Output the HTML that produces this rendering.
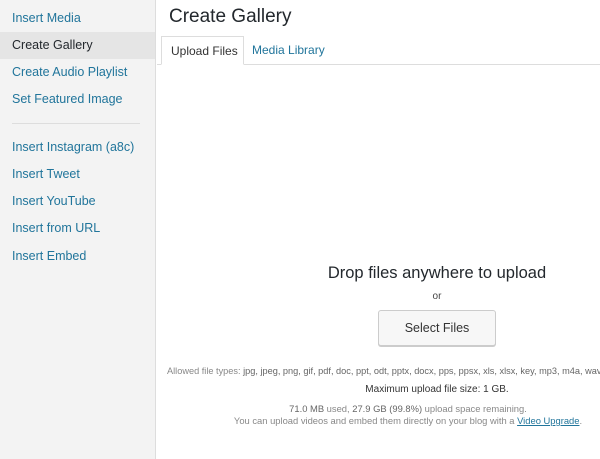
<!DOCTYPE html>
<html><head><style>
*{margin:0;padding:0;box-sizing:border-box}
body{width:600px;height:459px;overflow:hidden;font-family:"Liberation Sans",sans-serif;background:#fff;position:relative}
.side{position:absolute;left:0;top:0;width:156px;height:459px;background:#f3f3f3;border-right:1px solid #ddd}
.side a{position:absolute;left:12px;font-size:12.5px;color:#21759b;text-decoration:none;white-space:nowrap}
.act{position:absolute;left:0;top:32px;width:155px;height:27px;background:#e5e5e5}
.sep{position:absolute;left:12px;top:123px;width:128px;height:1px;background:#ddd}
h1{position:absolute;left:169px;top:6px;font-size:19px;font-weight:normal;color:#23282d;letter-spacing:0}
.line{position:absolute;left:157px;top:64px;width:443px;height:1px;background:#ddd}
.tab{position:absolute;top:36px;height:29px;font-size:12px;line-height:28px;padding:0 9px;white-space:nowrap}
.t1{left:161px;width:83px;border:1px solid #ddd;border-bottom:1px solid #fff;background:#fff;color:#333}
.t2{left:243px;color:#21759b}
.c{position:absolute;left:237px;width:400px;text-align:center;white-space:nowrap}
.c2{position:absolute;left:208px;width:400px;text-align:center;white-space:nowrap}
.btn{position:absolute;left:378px;top:310px;width:118px;height:36px;border:1px solid #ccc;border-radius:3px;background:#f7f7f7;box-shadow:0 1px 0 #ccc;font-size:12.5px;color:#333;text-align:center;line-height:34px}
</style></head><body>
<div class="side">
<div class="act"></div>
<a style="top:11px">Insert Media</a>
<a style="top:38px;color:#23282d">Create Gallery</a>
<a style="top:65px">Create Audio Playlist</a>
<a style="top:92px">Set Featured Image</a>
<div class="sep"></div>
<a style="top:140px">Insert Instagram (a8c)</a>
<a style="top:167px">Insert Tweet</a>
<a style="top:194px">Insert YouTube</a>
<a style="top:221px">Insert from URL</a>
<a style="top:249px">Insert Embed</a>
</div>
<h1>Create Gallery</h1>
<div class="line"></div>
<div class="tab t1">Upload Files</div>
<div class="tab t2">Media Library</div>
<div class="c" style="top:264px;font-size:16.5px;color:#23282d">Drop files anywhere to upload</div>
<div class="c" style="top:291px;font-size:10px;color:#444">or</div>
<div class="btn">Select Files</div>
<div style="position:absolute;left:167px;top:366px;font-size:9.2px;color:#888;white-space:nowrap">Allowed file types: <span style="color:#666">jpg, jpeg, png, gif, pdf, doc, ppt, odt, pptx, docx, pps, ppsx, xls, xlsx, key, mp3, m4a, wav</span></div>
<div class="c" style="top:384px;font-size:10px;color:#333">Maximum upload file size: 1 GB.</div>
<div class="c2" style="top:403px;font-size:9.4px;color:#888"><span style="color:#666">71.0 MB</span> used, <span style="color:#666">27.9 GB (99.8%)</span> upload space remaining.</div>
<div class="c2" style="top:415px;font-size:9.4px;color:#888">You can upload videos and embed them directly on your blog with a <span style="color:#21759b;text-decoration:underline">Video Upgrade</span>.</div>
</body></html>
